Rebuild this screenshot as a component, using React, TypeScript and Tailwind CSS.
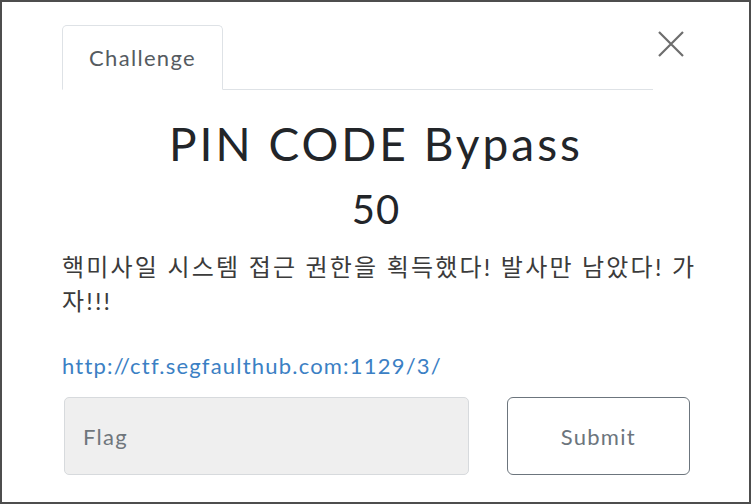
import React, { useState } from 'react';

const font = { fontFamily: 'Lato, "Noto Sans CJK KR", sans-serif' };

export default function App() {
  const [flag, setFlag] = useState('');

  return (
    <div
      className="w-[751px] h-[504px] bg-white border-2 border-[#4d4d4d] overflow-hidden font-['Lato','Noto_Sans_CJK_KR',sans-serif]"
      style={font}
    >
      <div className="pl-[60px] pr-[59px] pt-[23px]">
        {/* Tabs + close */}
        <div className="flex items-start">
          <div className="w-[591px] flex border-b border-[#dee2e6]">
            <div className="w-[161px] h-[65px] -mb-px bg-white border border-[#dee2e6] border-b-white rounded-t-[5px] flex items-center justify-center text-[22px] tracking-[1.3px] text-[#555b61]">
              Challenge
            </div>
          </div>
          <button className="ml-[4px] mt-[5px] w-[28px] h-[28px] flex items-center justify-center text-[#6d6d6d]">
            <svg width="26" height="26" viewBox="0 0 26 26" fill="none" stroke="currentColor" strokeWidth="2.2">
              <path d="M1 1 L25 25 M25 1 L1 25" />
            </svg>
          </button>
        </div>

        {/* Title */}
        <h3 className="mt-[26px] text-center text-[46px] leading-[56px] tracking-[3px] text-[#222529] font-normal">
          PIN CODE Bypass
        </h3>
        <div className="mt-[15px] text-center text-[40px] leading-[44px] tracking-[1px] text-[#222529]">50</div>

        {/* Description */}
        <p className="mt-[19px] w-[645px] text-[24px] leading-[34px] tracking-[2.2px] text-[#3b3b3b]">
          핵미사일 시스템 접근 권한을 획득했다! 발사만 남았다! 가자!!!
        </p>

        <a href="#" className="block mt-[33px] text-[22px] leading-[30px] tracking-[1.2px] text-[#3b80c4]">
          http://ctf.segfaulthub.com:1129/3/
        </a>

        {/* Flag form */}
        <div className="mt-[16px] flex items-center">
          <input
            value={flag}
            onChange={(e) => setFlag(e.target.value)}
            placeholder="Flag"
            className="w-[406px] h-[78px] ml-[2px] px-[18px] bg-[#efefef] border border-[#d7dadd] rounded-[5px] text-[22px] tracking-[1.3px] text-[#495057] placeholder:text-[#6f767c] outline-none"
          />
          <button className="ml-[38px] w-[184px] h-[78px] border-[1.5px] border-[#6c757d] rounded-[6px] bg-white text-[22px] tracking-[1.3px] text-[#6c757d]">
            Submit
          </button>
        </div>
      </div>
    </div>
  );
}
